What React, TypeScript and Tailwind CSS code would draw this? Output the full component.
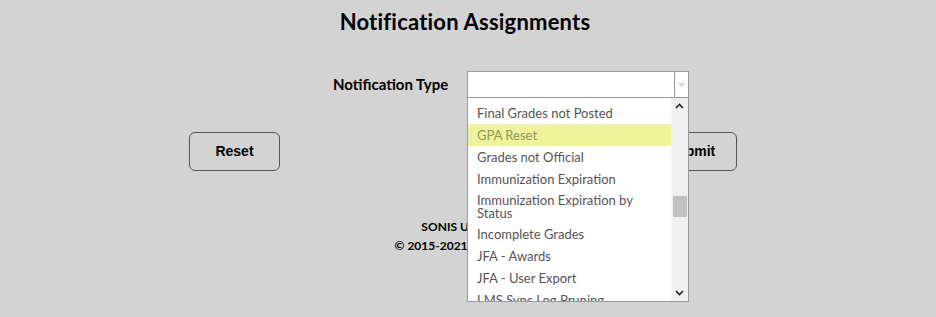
import React from "react";

const items: { label: string; hl?: boolean; two?: boolean }[] = [
  { label: "Final Grades not Posted" },
  { label: "GPA Reset", hl: true },
  { label: "Grades not Official" },
  { label: "Immunization Expiration" },
  { label: "Immunization Expiration by Status", two: true },
  { label: "Incomplete Grades" },
  { label: "JFA - Awards" },
  { label: "JFA - User Export" },
  { label: "LMS Sync Log Pruning" },
];

export default function App() {
  return (
    <div
      className="w-[936px] h-[317px] bg-[#d3d3d3] overflow-hidden relative"
      style={{ fontFamily: "Lato, 'Open Sans', sans-serif" }}
    >
      <div className="flex flex-col items-center">
        <h1 className="mt-[8px] ml-[-6px] text-[22px] tracking-[0.2px] leading-[28px] font-bold text-black">
          Notification Assignments
        </h1>
        <div className="mt-[35px] self-stretch flex items-center pl-[333px]">
          <span className="text-[15px] font-bold text-black w-[134px]">Notification Type</span>
          <div className="relative w-[222px] h-[27px] bg-white border border-[#9a9a9a] flex justify-end">
            <div className="w-[14px] h-full border-l border-[#9a9a9a] flex items-center justify-center">
              <svg width="7" height="5" viewBox="0 0 7 5">
                <path d="M1 1 L3.5 3.5 L6 1" stroke="#aaa" strokeWidth="1" fill="none" />
              </svg>
            </div>
            <div className="absolute left-[-1px] top-[25px] w-[222px] h-[205px] bg-white border border-[#9a9a9a] flex z-10">
              <div className="flex-1 overflow-hidden pt-[4px]">
                {items.map((it) => (
                  <div
                    key={it.label}
                    className={
                      "pl-[9px] pr-[6px] text-[13px] " +
                      (it.hl
                        ? "bg-[#eef39c] text-[#8b9a58] h-[22px] leading-[22px]"
                        : it.two
                        ? "text-[#555] h-[33px] leading-[13px] pt-[4px]"
                        : "text-[#555] h-[22px] leading-[22px]")
                    }
                  >
                    {it.label}
                  </div>
                ))}
              </div>
              <div className="w-[17px] bg-[#f0f0f0] flex flex-col items-center">
                <svg width="9" height="6" viewBox="0 0 9 6" className="mt-[5px]">
                  <path d="M1 5 L4.5 1.5 L8 5" stroke="#222" strokeWidth="1.6" fill="none" />
                </svg>
                <div className="mt-[87px] w-[14px] h-[21px] bg-[#c1c1c1]" />
                <div className="flex-1" />
                <svg width="9" height="6" viewBox="0 0 9 6" className="mb-[5px]">
                  <path d="M1 1 L4.5 4.5 L8 1" stroke="#222" strokeWidth="1.6" fill="none" />
                </svg>
              </div>
            </div>
          </div>
        </div>
        <div
          className="mt-[34px] flex gap-[366px] ml-[-10px]"
          style={{ fontFamily: "'Liberation Sans', Arial, sans-serif" }}
        >
          <button className="w-[91px] h-[39px] border border-[#555] rounded-[6px] text-[14px] font-bold text-black">
            Reset
          </button>
          <button className="w-[91px] h-[39px] border border-[#555] rounded-[6px] text-[14px] font-bold text-black">
            Submit
          </button>
        </div>
        <div className="mt-[46px] text-[12px] font-bold text-black text-center leading-[19px]">
          <div>SONIS University</div>
          <div>© 2015-2021 Jenzabar, Inc.</div>
        </div>
      </div>
    </div>
  );
}
